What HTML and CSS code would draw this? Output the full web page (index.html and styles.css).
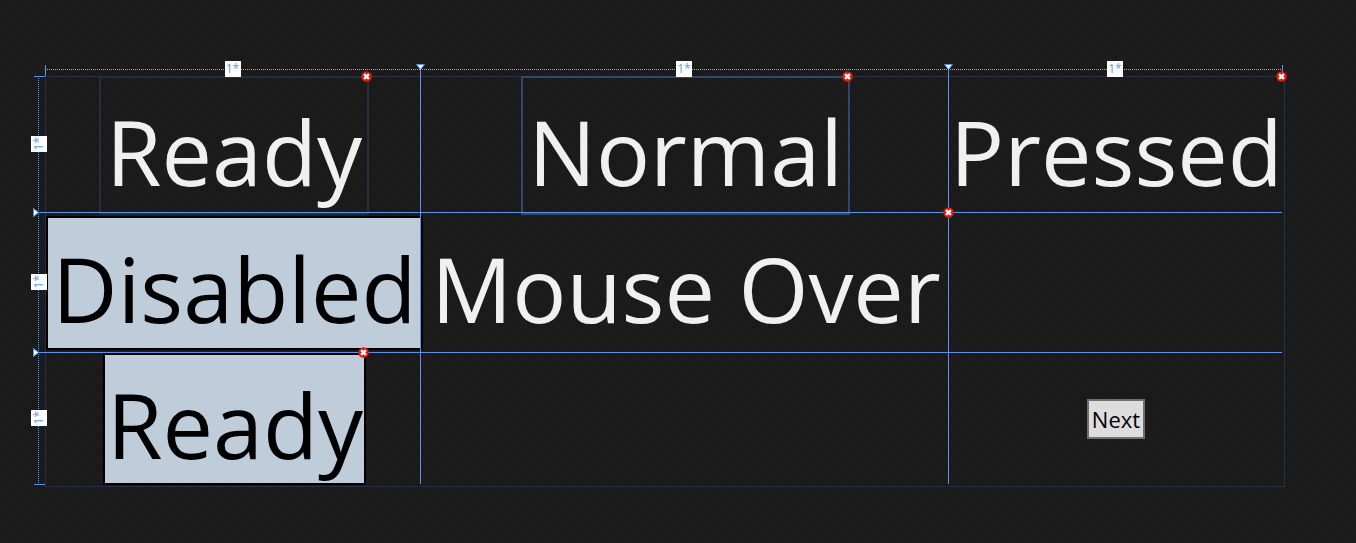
FILE: index.html
```html
<!DOCTYPE html>
<html lang="en">
<head>
<meta charset="utf-8">
<title>Grid designer</title>
<link rel="stylesheet" href="styles.css">
</head>
<body>
<svg class="defs" aria-hidden="true">
  <symbol id="error" viewBox="0 0 11 11">
    <circle cx="5.5" cy="5.5" r="5.3" fill="#e0180c"/>
    <path d="M3.1 3.1l4.8 4.8M7.9 3.1l-4.8 4.8" stroke="#fff" stroke-width="2.2"/>
  </symbol>
  <symbol id="down" viewBox="0 0 9 6">
    <path d="M0.5 0.5h8L4.5 5.5z" fill="#fff" stroke="#5b92f0"/>
  </symbol>
  <symbol id="right" viewBox="0 0 6 9">
    <path d="M0.5 0.5v8L5.5 4.5z" fill="#fff" stroke="#5b92f0"/>
  </symbol>
</svg>
<main class="designer">
  <div class="ruler top c1"><span class="size">1*</span></div>
  <div class="ruler top c2"><span class="size">1*</span></div>
  <div class="ruler top c3"><span class="size">1*</span></div>
  <div class="ruler side r1"><span class="size">1*</span></div>
  <div class="ruler side r2"><span class="size">1*</span></div>
  <div class="ruler side r3"><span class="size">1*</span></div>
  <div class="tick-v c1"></div>
  <div class="tick-v end"></div>
  <div class="tick-h r1"></div>
  <div class="tick-h bottom"></div>
  <div class="board"></div>

  <div class="cell c1 r1"><button class="state outline faint">Ready<svg class="error"><use href="#error"/></svg></button></div>
  <div class="cell c2 r1"><button class="state outline">Normal<svg class="error"><use href="#error"/></svg></button></div>
  <div class="cell c3 r1"><button class="state">Pressed</button></div>
  <div class="cell c1 r2"><button class="state filled">Disabled</button></div>
  <div class="cell c2 r2"><button class="state">Mouse Over</button></div>
  <div class="cell c1 r3"><button class="state filled">Ready<svg class="error"><use href="#error"/></svg></button></div>
  <div class="cell c3 r3"><button class="next">Next</button></div>

  <div class="line-h r2"><svg class="right"><use href="#right"/></svg></div>
  <div class="line-h r3"><svg class="right"><use href="#right"/></svg></div>
  <div class="line-v c2"><svg class="down"><use href="#down"/></svg></div>
  <div class="line-v c3"><svg class="down"><use href="#down"/></svg><svg class="error cross"><use href="#error"/></svg></div>
  <div class="corner"><svg class="error"><use href="#error"/></svg></div>
</main>
</body>
</html>
```
FILE: styles.css
```css
* { box-sizing: border-box; }
body {
  margin: 0;
  padding: 62px 71px 56px 31px;
  min-height: 100vh;
  background: repeating-conic-gradient(#1c1c1c 0 25%, #1a1a1a 0 50%) 0 0 / 16px 16px;
  color: #f0f0f0;
  font-family: "Open Sans", "Noto Sans", sans-serif;
}
svg { display: block; }
.defs { position: absolute; width: 0; height: 0; }
.designer {
  display: grid;
  grid-template-columns: 14px minmax(0, 375fr) minmax(0, 528fr) minmax(0, 334fr) 3px;
  grid-template-rows: 14px 136px 140px 132px 3px;
}
.c1 { grid-column: 2; }
.c2 { grid-column: 3; }
.c3 { grid-column: 4; }
.r1 { grid-row: 2; }
.r2 { grid-row: 3; }
.r3 { grid-row: 4; }

.ruler { display: flex; align-items: center; justify-content: center; z-index: 3; }
.ruler.top {
  grid-row: 1;
  background: repeating-linear-gradient(90deg, #8fb4f5 0 1px, transparent 1px 2px) 0 7px / 100% 1px no-repeat;
}
.ruler.side {
  grid-column: 1;
  background: repeating-linear-gradient(#5b92f0 0 1px, transparent 1px 2px) 7px 0 / 1px 100% no-repeat;
}
.size {
  flex: none;
  width: 16px;
  height: 16px;
  background: #fff;
  color: #6496f0;
  font-size: 12px;
  line-height: 16px;
  text-align: center;
}
.side .size { writing-mode: sideways-lr; margin-left: 2px; }

.tick-v { grid-row: 1; width: 1px; height: 11px; align-self: end; background: #5b92f0; }
.tick-v.end { grid-column: 5; }
.tick-h { grid-column: 1; width: 11px; height: 1px; justify-self: end; background: #5b92f0; }
.tick-h.bottom { grid-row: 5; }

.board { grid-area: 2 / 2 / 6 / 6; border: 1px solid #233048; }

.cell { display: flex; justify-content: center; align-items: flex-start; min-width: 0; }
.cell.r1 { padding-left: 3px; }
.cell.r2 { padding: 4px 0 0 4px; }
.cell.r3.c1 { padding: 1px 0 0 4px; }
.state {
  position: relative;
  flex: none;
  padding: 15px 5px 4px;
  border: 2px solid transparent;
  background: none;
  color: inherit;
  font: 90px/116px "Open Sans", "Noto Sans", sans-serif;
  white-space: nowrap;
}
.r2 .state { padding: 12px 4px 2px; }
.r3 .state { padding: 11px 1px 1px 2px; }
.outline { border-color: #33476a; }
.faint { border-color: #262d3b; }
.filled { border-color: #000; background: #bfccd9; color: #000; }
.next {
  padding: 0 3px;
  border: 2px solid #707070;
  background: #ddd;
  color: #000;
  font: 22px/36px "Open Sans", "Noto Sans", sans-serif;
}
.cell.r3.c3 { align-items: center; padding: 2px 0 0 2px; }

.line-v, .line-h, .corner { position: relative; z-index: 2; }
.line-v { grid-row: 1 / 5; width: 1px; margin-top: 4px; background: #5b92f0; }
.line-h { grid-column: 1 / 5; height: 1px; margin-left: 4px; background: #5b92f0; }
.down { position: absolute; left: -4px; top: -2px; width: 9px; height: 6px; }
.right { position: absolute; left: -2px; top: -4px; width: 6px; height: 9px; }
.error { position: absolute; z-index: 4; right: -5px; top: -7px; width: 11px; height: 11px; }
.r3 .error { top: -8px; }
.line-v .cross { left: -5px; top: 141px; }
.corner { grid-area: 2 / 5; }
.corner .error { right: -2px; top: -5px; }
```
